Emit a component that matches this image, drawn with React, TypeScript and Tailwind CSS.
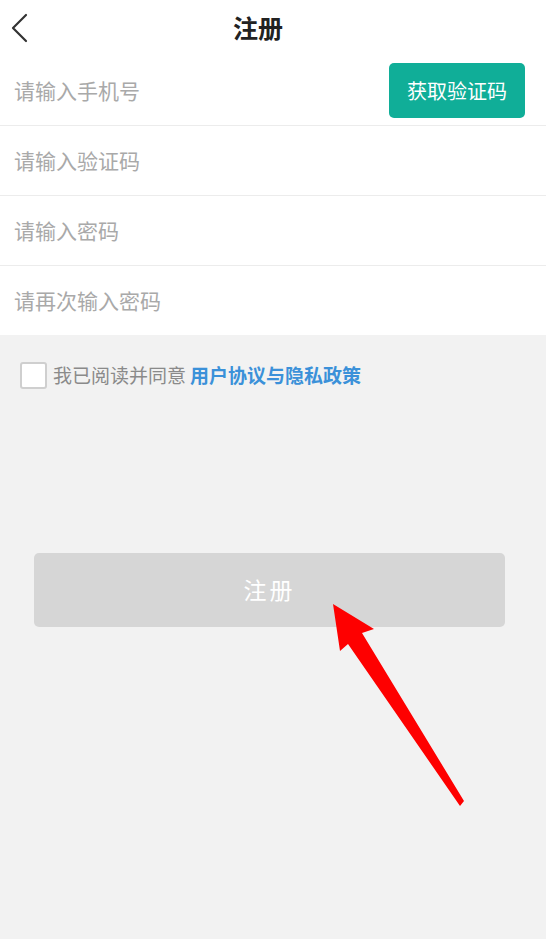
import React from "react";

const font = { fontFamily: '"Noto Sans CJK SC", "Noto Sans", sans-serif' };

function Row({ placeholder, children, border = true, h = "h-[70px]" }: { placeholder: string; children?: React.ReactNode; border?: boolean; h?: string }) {
  return (
    <div className={`flex ${h} items-center justify-between bg-white pl-[14px] pr-[21px] ${border ? "border-b border-[#ececec]" : ""}`}>
      <span className="text-[21px] text-[#a9a9a9]">{placeholder}</span>
      {children}
    </div>
  );
}

export default function App() {
  return (
    <div className="relative flex min-h-[939px] w-[546px] flex-col bg-[#f2f2f2]" style={font}>
      <div className="relative flex h-[56px] items-center justify-center bg-white pr-[30px]">
        <svg className="absolute left-[9px] top-[13px]" width="20" height="30" viewBox="0 0 20 30">
          <path d="M17 2 L4 15 L17 28" fill="none" stroke="#333" strokeWidth="2.2" strokeLinecap="round" strokeLinejoin="round" />
        </svg>
        <span className="text-[25px] font-bold text-[#222]">注册</span>
      </div>
      <Row placeholder="请输入手机号">
        <button className="h-[55px] w-[136px] rounded-[5px] bg-[#10ae98] text-[20px] text-white">获取验证码</button>
      </Row>
      <Row placeholder="请输入验证码" />
      <Row placeholder="请输入密码" />
      <Row placeholder="请再次输入密码" border={false} h="h-[69px]" />

      <div className="mt-[26px] flex items-center pl-[20px]">
        <div className="h-[27px] w-[27px] rounded-[3px] border-2 border-[#cfcfcf] bg-white" />
        <span className="ml-[6px] text-[19px] text-[#8a8a8a]">我已阅读并同意</span>
        <span className="ml-[4px] text-[19px] font-bold text-[#3b91d9]">用户协议与隐私政策</span>
      </div>

      <div className="mt-[163px] px-[34px]">
        <button className="flex h-[74px] w-[471px] items-center justify-center rounded-[5px] bg-[#d6d6d6] text-[23px] tracking-[3px] text-white">
          注册
        </button>
      </div>

      <svg className="pointer-events-none absolute left-0 top-0" width="546" height="939" viewBox="0 0 546 939">
        <polygon
          points="333,604 374,629 362,633 464,801 460,806 348,644 340,651"
          fill="#fe0000"
          strokeLinejoin="round"
        />
      </svg>
    </div>
  );
}
